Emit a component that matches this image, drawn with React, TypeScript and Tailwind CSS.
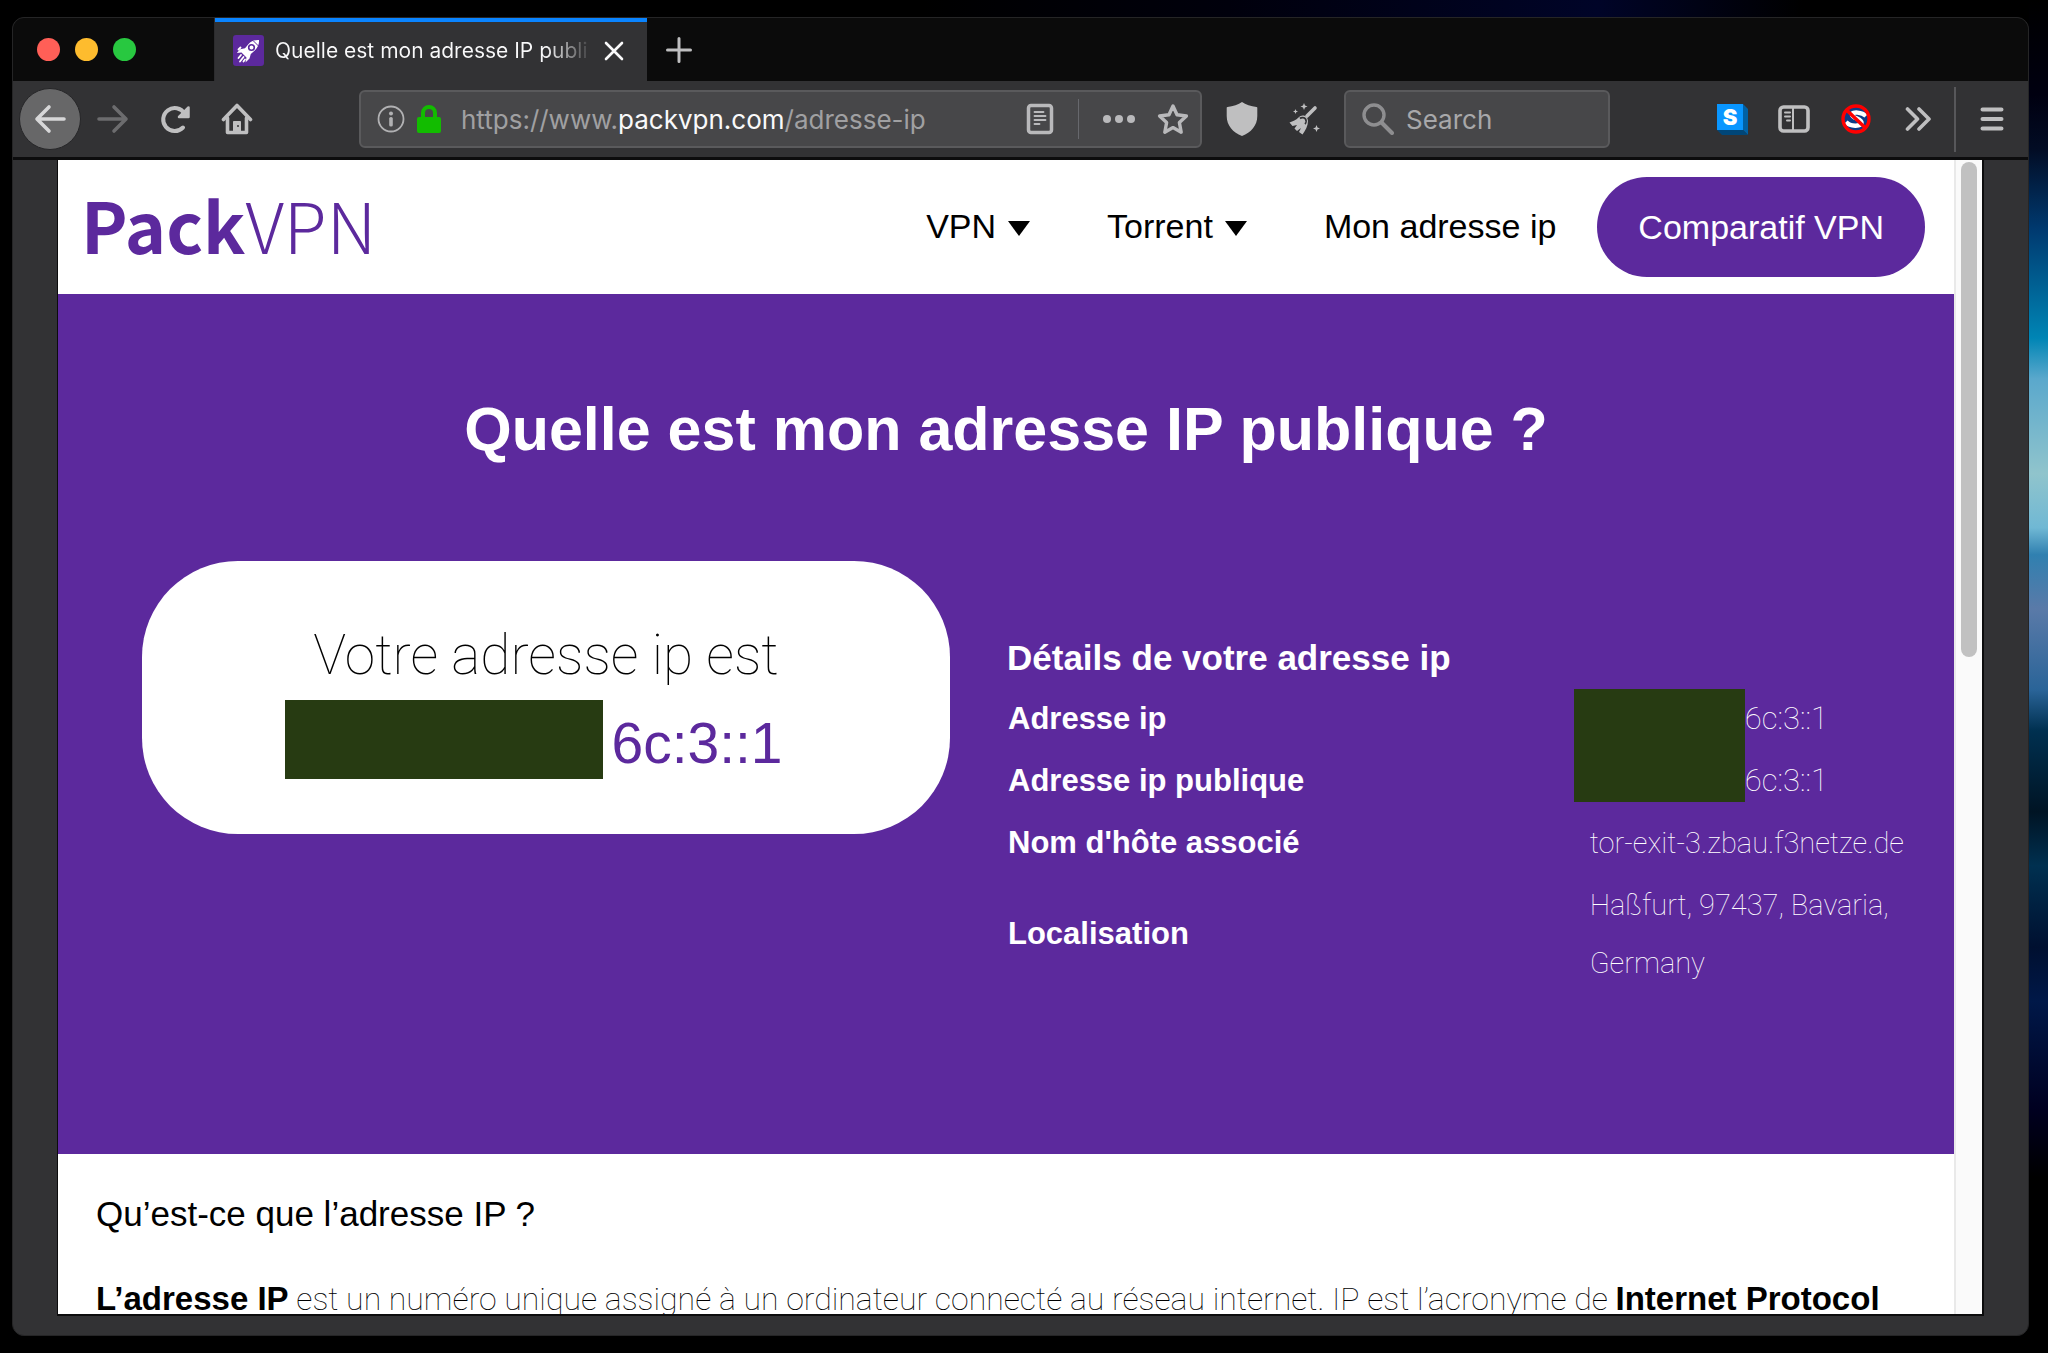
import React from 'react';

const iconBtn = 'flex h-[62px] w-[62px] shrink-0 items-center justify-center text-[#bfbfc0]';

const RocketIcon = () => (
  <svg viewBox="0 0 31 31" className="h-[31px] w-[31px] shrink-0">
    <rect width="31" height="31" rx="3" fill="#5c299d" />
    <path fill="#fff" d="M26 5c-4-.3-7.600 1-10.200 3.800L12 13.200l-4.800 1L3.800 18l4.700-.6 5 5-1 5 4-3.800 1.300-4.600 4-3.600C25 12.400 26.300 9 26 5z" />
    <path stroke="#5c299d" strokeWidth="1" d="M20.500 6l5 5" />
    <circle cx="18.500" cy="12.500" r="2.800" fill="#fff" stroke="#5c299d" strokeWidth="1.600" />
    <path stroke="#fff" strokeWidth="1.800" strokeLinecap="round" d="M8 20l-2.500 3M10.500 22L7 26.500M12 24.500L10.500 26.500M5.500 14.500l2-2" />
  </svg>
);

const BackIcon = () => (
  <svg viewBox="0 0 32 32" className="h-8 w-8" fill="none" stroke="currentColor" strokeWidth="3.600" strokeLinecap="round" strokeLinejoin="round">
    <path d="M30 16H3.500M15 4L3 16l12 12" />
  </svg>
);

const ForwardIcon = () => (
  <svg viewBox="0 0 32 32" className="h-8 w-8" fill="none" stroke="currentColor" strokeWidth="3.600" strokeLinecap="round" strokeLinejoin="round">
    <path d="M2 16h26.500M17 4l12 12-12 12" />
  </svg>
);

const ReloadIcon = () => (
  <svg viewBox="0 0 32 32" className="h-8 w-8" fill="none" stroke="currentColor" strokeWidth="4" strokeLinecap="round" strokeLinejoin="round">
    <path d="M24 24.500a11.500 11.500 0 1 1 1.500-14" />
    <path d="M29.500 4.500v9.500h-9.500z" fill="currentColor" strokeWidth="2.500" />
  </svg>
);

const HomeIcon = () => (
  <svg viewBox="0 0 32 32" className="h-8 w-8" fill="none" stroke="currentColor" strokeWidth="3.600" strokeLinecap="round" strokeLinejoin="round">
    <path d="M2.500 16.500L16 2.500l13.500 14" />
    <path d="M6.500 15v14.500h19V15" />
    <path d="M12.500 29V18.500h7V29z" fill="currentColor" strokeWidth="1" />
    <circle cx="17" cy="23" r="1" fill="#323234" stroke="none" />
  </svg>
);

const InfoIcon = () => (
  <svg viewBox="0 0 28 28" className="h-7 w-7 shrink-0">
    <circle cx="14" cy="14" r="12.500" fill="none" stroke="#b1b1b3" strokeWidth="1.800" />
    <circle cx="14" cy="8.500" r="2" fill="#b1b1b3" />
    <rect x="12.200" y="12" width="3.600" height="9.500" rx="1.600" fill="#b1b1b3" />
  </svg>
);

const LockIcon = () => (
  <svg viewBox="0 0 24 28" className="h-7 w-6 shrink-0">
    <path d="M6 14V8a6 6 0 0 1 12 0v6" fill="none" stroke="#12bc00" strokeWidth="4" />
    <rect y="12" width="24" height="16" rx="2" fill="#12bc00" />
  </svg>
);

const ReaderIcon = () => (
  <svg viewBox="0 0 28 32" className="h-8 w-7" fill="none" stroke="currentColor">
    <rect x="2.500" y="2.500" width="23" height="27" rx="2.500" strokeWidth="3.500" />
    <path strokeWidth="1.800" strokeLinecap="round" d="M8.500 9h9M8.500 13h11M8.500 17h11M8.500 21h5" />
  </svg>
);

const DotsIcon = () => (
  <svg viewBox="0 0 32 8" className="h-2 w-8" fill="currentColor">
    <circle cx="4" cy="4" r="4" />
    <circle cx="16" cy="4" r="4" />
    <circle cx="28" cy="4" r="4" />
  </svg>
);

const StarIcon = () => (
  <svg viewBox="0 0 32 32" className="h-8 w-8" fill="none" stroke="currentColor" strokeWidth="3.400" strokeLinejoin="round">
    <path d="M16 3l4 8.800 9.400 1.200-7 6.600 1.800 9.600L16 24.600l-8.200 4.600 1.800-9.600-7-6.600 9.400-1.200z" />
  </svg>
);

const ShieldIcon = () => (
  <svg viewBox="0 0 32 36" className="h-9 w-8" fill="currentColor">
    <path d="M16 1C12.500 3.500 7 5.500 1.500 6c-.5 0-.8.300-.8.800V15c0 9.500 6.300 16.500 15.300 20 9-3.500 15.300-10.500 15.300-20V6.800c0-.5-.3-.8-.8-.8C25 5.500 19.500 3.500 16 1z" />
  </svg>
);

const BroomIcon = () => (
  <svg viewBox="0 0 32 32" className="h-8 w-8" fill="currentColor">
    <path d="M27 5L19 13" stroke="currentColor" strokeWidth="3.600" strokeLinecap="round" />
    <path d="M10.500 14.500c3-3.500 9-2.500 9.500 3.500 0 5-2.500 9-5.500 13.500L11 29l2-4-4 3-2.500-2.500 2.500-3.500-4.500 1L1.500 19.500C5 18 8 17.500 10.500 14.500z" />
    <path d="M12 15.500c1.500-1.500 4.500-1 5.500.5s.5 4-.5 5" fill="none" stroke="#323234" strokeWidth="1.800" />
    <path d="M16 0l1 2.500 2.500 1L17 4.500 16 7l-1-2.500-2.500-1 2.500-1zM28.500 22l1 2.500 2.500 1-2.500 1-1 2.500-1-2.500-2.500-1 2.500-1zM7.500 6l.7 1.800 1.800.7-1.800.7-.7 1.800-.7-1.800L5 8.500l1.800-.7z" />
  </svg>
);

const SearchIcon = () => (
  <svg viewBox="0 0 32 32" className="h-8 w-8 shrink-0" fill="none" stroke="#8e8e90" strokeLinecap="round">
    <circle cx="12" cy="12" r="10" strokeWidth="3.400" />
    <path d="M19.500 19.500L30 30" strokeWidth="4" />
  </svg>
);

const StylusIcon = () => (
  <svg viewBox="0 0 31 31" className="h-[31px] w-[31px]">
    <path d="M26 0l5 5v26l-5-5z" fill="#0061a5" />
    <path d="M0 26l5 5h26l-5-5z" fill="#004678" />
    <rect width="26" height="26" fill="#0996ff" />
    <text x="13" y="21" textAnchor="middle" fontFamily="Inter, sans-serif" fontWeight="900" fontSize="22" fill="#fff">S</text>
  </svg>
);

const SidebarIcon = () => (
  <svg viewBox="0 0 32 28" className="h-7 w-8" fill="none" stroke="currentColor">
    <rect x="2" y="2" width="28" height="24" rx="3.500" strokeWidth="3.600" />
    <path d="M15 3v22" strokeWidth="2" />
    <path d="M7 7.500h5M7 11.500h5M9 15.500h3" strokeWidth="2" strokeLinecap="round" />
  </svg>
);

const NoScriptIcon = () => (
  <svg viewBox="0 0 30 30" className="h-[30px] w-[30px]">
    <circle cx="15" cy="15" r="12" fill="#0d3c86" />
    <path d="M25 12c-4-4-14-4.500-14-1.500 0 4 10 4 9.500 8.500-.5 3.500-11 4-15.500-1" fill="none" stroke="#fff" strokeWidth="4.500" />
    <circle cx="15" cy="15" r="13" fill="none" stroke="#f00" strokeWidth="3.400" />
    <path d="M5.500 6l19 18" stroke="#f00" strokeWidth="3.600" />
  </svg>
);

const ChevronsIcon = () => (
  <svg viewBox="0 0 26 24" className="h-6 w-[26px]" fill="none" stroke="currentColor" strokeWidth="3.600" strokeLinecap="round" strokeLinejoin="round">
    <path d="M2.500 2l10 10-10 10M14 2l10 10-10 10" />
  </svg>
);

const MenuIcon = () => (
  <svg viewBox="0 0 24 24" className="h-6 w-6" stroke="currentColor" strokeWidth="4" strokeLinecap="round">
    <path d="M2.500 2.500h19M2.500 12h19M2.500 21.500h19" />
  </svg>
);

const Caret = () => (
  <svg viewBox="0 0 22 15" className="mt-1 h-[15px] w-[22px]">
    <path d="M0 0h22L11 15z" fill="currentColor" />
  </svg>
);

const TabBar: React.FC = () => (
  <div className="flex h-[63px] shrink-0 bg-[#0b0b0b]">
    <div className="flex w-[202px] items-center gap-[15px] border-r border-[#2c2c2e] pl-6">
      <button aria-label="Close window" className="h-[23px] w-[23px] rounded-full bg-[#ff5f57]" />
      <button aria-label="Minimize window" className="h-[23px] w-[23px] rounded-full bg-[#febc2e]" />
      <button aria-label="Zoom window" className="h-[23px] w-[23px] rounded-full bg-[#28c840]" />
    </div>
    <div className="flex w-[432px] items-center gap-[11px] border-t-4 border-[#0a84ff] bg-[#323234] pb-[2px] pl-[18px]">
      <RocketIcon />
      <span className="w-[318px] overflow-hidden bg-gradient-to-r from-[#f9f9fa] from-85% to-transparent bg-clip-text font-['Inter',sans-serif] text-[21px] whitespace-nowrap text-transparent">
        Quelle est mon adresse IP publi
      </span>
      <button aria-label="Close tab" className="text-[#f9f9fa]">
        <svg viewBox="0 0 20 20" className="h-5 w-5" stroke="currentColor" strokeWidth="2.600" strokeLinecap="round">
          <path d="M2 2l16 16M18 2L2 18" />
        </svg>
      </button>
    </div>
    <button aria-label="New tab" className="flex w-16 items-center justify-center text-[#bfbfc0]">
      <svg viewBox="0 0 26 26" className="h-[26px] w-[26px]" stroke="currentColor" strokeWidth="3" strokeLinecap="round">
        <path d="M13 1.500v23M1.500 13h23" />
      </svg>
    </button>
  </div>
);

const Toolbar: React.FC = () => (
  <div className="flex h-[79px] shrink-0 items-center border-b-[3px] border-[#0c0c0d] bg-[#323234] pr-[5px] pl-[6px] font-['Inter',sans-serif]">
    <div className="flex">
      <button aria-label="Back" className="flex h-[62px] w-[62px] items-center justify-center rounded-full border border-[#262628] bg-[#676768] text-[#d7d7d8]">
        <BackIcon />
      </button>
      <button aria-label="Forward" disabled className="ml-px flex h-[62px] w-[62px] items-center justify-center text-[#6c6c6e]">
        <ForwardIcon />
      </button>
      <button aria-label="Reload" className={iconBtn}><ReloadIcon /></button>
      <button aria-label="Home" className={iconBtn}><HomeIcon /></button>
    </div>

    <div className="ml-[91px] flex h-[58px] min-w-0 flex-1 items-center rounded-md border-2 border-[#5a5a5c] bg-[#474749] pr-[11px] pl-4">
      <InfoIcon />
      <div className="ml-3"><LockIcon /></div>
      <div role="textbox" aria-label="Address" className="ml-5 flex-1 text-[26px] whitespace-nowrap text-[#a0a0a2]">
        https://www.<span className="text-[#f9f9fa]">packvpn.com</span>/adresse-ip
      </div>
      <div className="flex items-center text-[#b9b9bb]">
        <button aria-label="Reader view"><ReaderIcon /></button>
        <div className="mx-6 h-10 w-px bg-[#67686d]" />
        <button aria-label="Page actions"><DotsIcon /></button>
        <button aria-label="Bookmark this page" className="ml-[22px]"><StarIcon /></button>
      </div>
    </div>

    <div className="ml-[9px] flex">
      <button aria-label="Security level" className={iconBtn}><ShieldIcon /></button>
      <button aria-label="New identity" className={iconBtn}><BroomIcon /></button>
    </div>

    <label className="ml-[9px] flex h-[58px] w-[266px] items-center gap-3 rounded-md border-2 border-[#5a5a5c] bg-[#474749] px-4">
      <SearchIcon />
      <input type="text" aria-label="Search" placeholder="Search" className="w-full min-w-0 bg-transparent text-[26px] outline-none placeholder:text-[#a8a8aa]" />
    </label>

    <div className="ml-[91px] flex">
      <button aria-label="Stylus" className={iconBtn}><StylusIcon /></button>
      <button aria-label="Sidebars" className={iconBtn}><SidebarIcon /></button>
      <button aria-label="NoScript" className={iconBtn}><NoScriptIcon /></button>
      <button aria-label="More tools" className={iconBtn}><ChevronsIcon /></button>
    </div>
    <div className="mx-[5px] h-[65px] w-[2px] bg-[#57575a]" />
    <button aria-label="Open menu" className={iconBtn}><MenuIcon /></button>
  </div>
);

const SiteHeader: React.FC = () => (
  <header className="flex h-[134px] items-center justify-between bg-white pr-[29px] pb-px pl-[23px]">
    <a href="#" className="pb-[6px] font-['Noto_Sans_CJK_JP',sans-serif] text-[70px] leading-[100px] text-[#5c299d]">
      <span className="font-bold">Pack</span><span className="font-light">VPN</span>
    </a>
    <nav className="flex items-center text-[34px] text-black">
      <button className="mr-[77px] flex items-center gap-3">VPN <Caret /></button>
      <button className="mr-[77px] flex items-center gap-3">Torrent <Caret /></button>
      <a href="#" className="mr-[41px]">Mon adresse ip</a>
      <a href="#" className="rounded-full bg-[#5c299d] px-[41px] leading-[100px] text-white">Comparatif VPN</a>
    </nav>
  </header>
);

const details = [
  { label: 'Adresse ip', value: '6c:3::1', hidden: true },
  { label: 'Adresse ip publique', value: '6c:3::1', hidden: true },
  { label: "Nom d'hôte associé", value: 'tor-exit-3.zbau.f3netze.de' },
  { label: 'Localisation', value: 'Haßfurt, 97437, Bavaria, Germany' },
];

const IpSection: React.FC = () => (
  <section className="bg-[#5c299d] pt-[99px] pb-[161px] text-white">
    <h1 className="text-center text-[61px] leading-[72px] font-bold">Quelle est mon adresse IP publique ?</h1>
    <div className="mt-24 grid grid-cols-[808fr_918fr] items-start gap-14 pr-[30px] pl-[84px]">
      <div className="rounded-[96px] bg-white pt-[54px] pb-[55px]">
        <p className="text-center font-['Roboto',sans-serif] text-[55px] leading-[80px] font-thin text-black">Votre adresse ip est</p>
        <div className="mt-[5px] flex items-end justify-center gap-2 pr-6">
          <div className="h-[79px] w-[318px] bg-[#273b12]" />
          <p className="text-[57px] leading-[71px] text-[#5c299d]">6c:3::1</p>
        </div>
      </div>
      <div className="pt-[75px] pl-px">
        <h2 className="text-[35px] leading-[44px] font-bold">Détails de votre adresse ip</h2>
        <table className="mt-[7px] w-full text-left text-[31px] leading-[58px]">
          <tbody>
            {details.map((row, i) => (
              <tr key={row.label}>
                <th className="w-[63%] pt-[3px] pb-px pl-px font-bold">{row.label}</th>
                <td className={`pt-[3px] pb-px font-['Roboto',sans-serif] font-thin ${row.hidden ? 'relative pl-[160px] text-[31px]' : 'pl-[5px] text-[29px]'}`}>
                  {row.hidden && i === 0 && <span className="absolute top-[2px] -left-[11px] h-[113px] w-[171px] bg-[#273b12]" />}
                  {row.value}
                </td>
              </tr>
            ))}
          </tbody>
        </table>
      </div>
    </div>
  </section>
);

const Article: React.FC = () => (
  <article className="bg-white px-[38px] pt-[38px] text-black">
    <h3 className="text-[35px] leading-[44px]">Qu’est-ce que l’adresse IP ?</h3>
    <p className="mt-[38px] font-['Roboto',sans-serif] text-[32px] leading-[50px] font-thin whitespace-nowrap">
      <strong className="font-['Liberation_Sans',sans-serif] text-[33px] font-bold">L’adresse IP</strong> est un numéro unique assigné à un
      ordinateur connecté au réseau internet. IP est l’acronyme de{' '}
      <strong className="font-['Liberation_Sans',sans-serif] text-[33px] font-bold">Internet Protocol</strong>
    </p>
  </article>
);

export default function App() {
  return (
    <div className="flex h-screen bg-[linear-gradient(to_right,#000_45%,#00000c_60%,#000428_78%,#000_88%)] font-['Liberation_Sans',sans-serif]">
      <div className="flex min-w-0 flex-1 flex-col bg-[linear-gradient(to_bottom,transparent_60%,#000_75%)] pt-[17px] pb-[17px] pl-3">
        <div className="flex min-h-0 flex-1 flex-col overflow-hidden rounded-xl border border-[#252526] bg-[#323234]">
          <TabBar />
          <Toolbar />
          <div className="mx-[44px] mb-[19px] flex min-h-0 flex-1 border-r-2 border-b-2 border-l border-[#0c0c0d]">
            <main className="min-w-0 flex-1 overflow-hidden bg-white">
              <SiteHeader />
              <IpSection />
              <Article />
            </main>
            <div className="w-7 border-l-2 border-[#e9e9e9] bg-[#fafafa] pt-[2px] pl-[5px]">
              <div className="h-[43%] w-4 rounded-full bg-[#c1c1c1]" />
            </div>
          </div>
        </div>
      </div>
      <div className="w-[19px] bg-[linear-gradient(to_bottom,#000_0%,#000010_7%,#020c24_11%,#003a70_17%,#0085b5_25%,#5aa8cc_28%,#90c4cc_35%,#70b8d4_39%,#3080b0_41%,#5a7aa8_45%,#2a6498_51%,#003050_54%,#001424_60%,#003050_64%,#001030_70%,#001848_74%,#000020_82%,#000_87%)]" />
    </div>
  );
}
